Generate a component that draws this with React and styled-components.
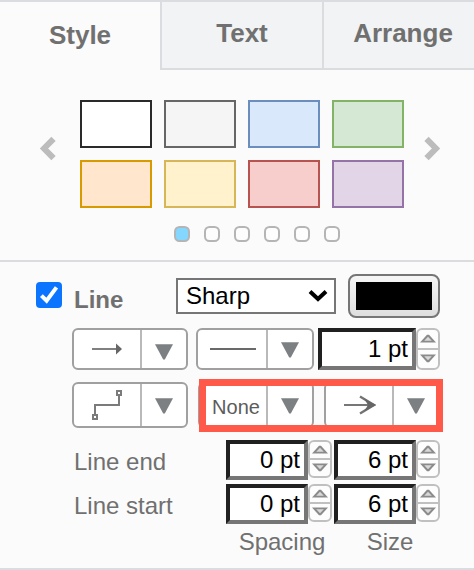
import React from "react";
import styled, { createGlobalStyle } from "styled-components";

const GlobalStyle = createGlobalStyle`
  *, *::before, *::after { box-sizing: border-box; }
  body { margin: 0; background: #fbfbfb; }
`;

const Panel = styled.main`
  width: 474px;
  height: 570px;
  display: flex;
  flex-direction: column;
  overflow: hidden;
  background: #fbfbfb;
  border-top: 2px solid #dadce0;
  border-bottom: 2px solid #dadce0;
  color: #707070;
  font-family: "Liberation Sans", Arial, Helvetica, sans-serif;
  font-size: 24px;
`;

const Tabs = styled.nav`
  display: grid;
  grid-template-columns: 160px 162px 160px;
  height: 68px;
`;

const Tab = styled.button`
  appearance: none;
  margin: 0;
  padding: ${(p) => (p.$active ? "18px 0 0" : "16px 0 0")};
  display: flex;
  align-items: flex-start;
  justify-content: center;
  border: 0 solid #dadce0;
  border-width: ${(p) => (p.$active ? "0" : "0 0 2px 2px")};
  background: ${(p) => (p.$active ? "#fbfbfb" : "#f1f3f4")};
  color: #707070;
  font: bold 26px/30px "Liberation Sans", Arial, sans-serif;
`;

const StyleSection = styled.section`
  height: 192px;
  border-bottom: 2px solid #dadce0;
  padding-top: 30px;
`;

const Carousel = styled.div`
  display: flex;
  align-items: center;
  height: 108px;
  padding: 0 33px 0 38px;
  justify-content: space-between;
`;

const Swatches = styled.div`
  display: grid;
  grid-template-columns: repeat(4, 72px);
  grid-auto-rows: 48px;
  gap: 12px;
`;

const Swatch = styled.div`
  background: ${(p) => p.$fill};
  border: 2px solid ${(p) => p.$stroke};
`;

const Arrow = styled.svg`
  display: block;
  width: 18px;
  height: 28px;
  margin: -11px ${(p) => (p.$right ? "0" : "24px")} 0 ${(p) => (p.$right ? "19px" : "0")};
`;

const Dots = styled.div`
  display: flex;
  gap: 14px;
  padding: 18px 0 0 174px;
`;

const Dot = styled.span`
  width: 16px;
  height: 16px;
  border: 2px solid #b5b5b5;
  border-radius: 5.5px;
  background: ${(p) => (p.$on ? "#84d7ff" : "#fdfdfd")};
`;

const LineSection = styled.section`
  flex: 1;
  padding-top: 12px;
`;

const LineHeader = styled.div`
  display: flex;
  align-items: center;
  height: 44px;
  padding: 0 34px 0 36px;
`;

const Check = styled.span`
  width: 26px;
  height: 26px;
  margin-top: -2px;
  border-radius: 4px;
  background: #0b75ff;
`;

const LineTitle = styled.strong`
  margin: 8px 0 0 12px;
  width: 102px;
  line-height: 28px;
`;

const Select = styled.div`
  width: 160px;
  height: 36px;
  padding: 0 6px 0 8px;
  display: flex;
  align-items: center;
  justify-content: space-between;
  border: 2px solid #767676;
  background: #fff;
  color: #000;
  line-height: 32px;
`;

const ColorButton = styled.div`
  width: 92px;
  height: 44px;
  margin-left: 12px;
  padding: 6px;
  border: 2px solid #767676;
  border-radius: 8px;
  background: linear-gradient(#f6f6f6, #dedede);
`;

const ColorFill = styled.div`
  height: 28px;
  background: #000;
`;

const ButtonRow = styled.div`
  position: relative;
  display: flex;
  height: ${(p) => p.$height}px;
  margin-top: ${(p) => p.$top}px;
  padding-left: 72px;
`;

const SplitButton = styled.div`
  display: flex;
  width: ${(p) => p.$width || 116}px;
  margin-left: ${(p) => p.$gap || 0}px;
  border: 2px solid #a0a0a0;
  border-radius: 6px;
  background: #fff;
  overflow: hidden;
`;

const ButtonFace = styled.div`
  flex: 1;
  display: flex;
  align-items: center;
  justify-content: center;
  color: #5c5c5c;
  font-size: 20px;
  padding-top: ${(p) => p.$drop || 0}px;
  padding-left: ${(p) => p.$inset || 0}px;
`;

const DropFace = styled.div`
  width: 46px;
  flex: none;
  display: flex;
  align-items: center;
  justify-content: center;
  border-left: 2px solid #b9b9b9;
  padding: ${(p) => (p.$tall ? "2px" : "5px")} 1px 0 0;
`;

const Highlight = styled.div`
  position: absolute;
  left: 199px;
  top: -3px;
  width: 244px;
  height: 53px;
  border: 7px solid #ff594a;
`;

const Field = styled.div`
  width: ${(p) => p.$width || 82}px;
  height: ${(p) => p.$height || 40}px;
  padding-right: 4px;
  border: 4px solid;
  border-color: #202020 #767676 #767676 #202020;
  background: #fff;
  color: #000;
  line-height: ${(p) => (p.$height || 40) - 8}px;
  text-align: right;
`;

const SpinnerBox = styled.div`
  width: 24px;
  height: ${(p) => p.$height}px;
  display: flex;
  flex-direction: column;
  border: 2px solid #c0c0c0;
  border-radius: 6px;
  background: #fdfdfd;
`;

const SpinnerHalf = styled.div`
  flex: 1;
  display: flex;
  align-items: center;
  justify-content: center;
  & + & { border-top: 2px solid #c0c0c0; }
`;

const ValueRow = styled.div`
  display: flex;
  height: 40px;
  margin-top: ${(p) => p.$top}px;
  padding-left: 74px;
`;

const ValueLabel = styled.span`
  width: 152px;
  padding-top: 8px;
  line-height: 28px;
`;

const FieldGroup = styled.div`
  display: flex;
  margin-left: ${(p) => p.$gap || 0}px;
`;

const Captions = styled.div`
  display: grid;
  grid-template-columns: 108px 108px;
  margin: 4px 0 0 228px;
  line-height: 28px;
  text-align: center;
`;

const swatches = [
  ["#ffffff", "#2a2a2a"], ["#f5f5f5", "#666666"],
  ["#dae8fc", "#6c8ebf"], ["#d5e8d4", "#82b366"],
  ["#ffe6cc", "#d79b00"], ["#fff2cc", "#d6b656"],
  ["#f8cecc", "#b85450"], ["#e1d5e7", "#9673a6"],
];

function Chevron({ right }) {
  return (
    <Arrow $right={right} viewBox="0 0 18 28">
      <path d={right ? "M3.5 3.8L13 13.5 3.5 23.2" : "M15.5 3.8L6 13.5l9.5 9.7"} fill="none" stroke="#bcbcbc" strokeWidth="6" />
    </Arrow>
  );
}

function Drop({ tall }) {
  return (
    <DropFace $tall={tall}>
      <svg width="20" height="18" viewBox="0 0 20 18">
        <path d="M1 1.2h18L10.8 16.5H9.2Z" fill="#7d8082" />
      </svg>
    </DropFace>
  );
}

function Spinner({ height = 38 }) {
  return (
    <SpinnerBox $height={height}>
      <SpinnerHalf>
        <svg width="18" height="12" viewBox="0 0 18 12">
          <path d="M1 9.5L8 1.7h2l7 7.8Z" fill="#8b8b8b" />
          <path d="M5.2 7.8L9 3.8l3.8 4Z" fill="#d8d8d8" />
        </svg>
      </SpinnerHalf>
      <SpinnerHalf>
        <svg width="18" height="12" viewBox="0 0 18 12">
          <path d="M1 1.5L8 9.3h2l7-7.8Z" fill="#8b8b8b" />
          <path d="M5.2 3.2L9 7.2l3.8-4Z" fill="#d8d8d8" />
        </svg>
      </SpinnerHalf>
    </SpinnerBox>
  );
}

function ValueLine({ label, top }) {
  return (
    <ValueRow $top={top}>
      <ValueLabel>{label}</ValueLabel>
      <FieldGroup><Field>0 pt</Field><Spinner /></FieldGroup>
      <FieldGroup $gap={2}><Field>6 pt</Field><Spinner /></FieldGroup>
    </ValueRow>
  );
}

export default function App() {
  return (
    <>
      <GlobalStyle />
      <Panel>
        <Tabs>
          <Tab $active>Style</Tab>
          <Tab>Text</Tab>
          <Tab>Arrange</Tab>
        </Tabs>
        <StyleSection>
          <Carousel>
            <Chevron />
            <Swatches>
              {swatches.map(([fill, stroke]) => <Swatch key={fill} $fill={fill} $stroke={stroke} />)}
            </Swatches>
            <Chevron right />
          </Carousel>
          <Dots>
            {[0, 1, 2, 3, 4, 5].map((n) => <Dot key={n} $on={n === 0} />)}
          </Dots>
        </StyleSection>
        <LineSection>
          <LineHeader>
            <Check>
              <svg width="26" height="26" viewBox="0 0 26 26">
                <path d="M5.4 13.6l5.2 5.1L20.5 5.4" fill="none" stroke="#fff" strokeWidth="4" />
              </svg>
            </Check>
            <LineTitle>Line</LineTitle>
            <Select>
              Sharp
              <svg width="20" height="14" viewBox="0 0 20 14">
                <path d="M2 2.5l8 7.5 8-7.5" fill="none" stroke="#000" strokeWidth="4" />
              </svg>
            </Select>
            <ColorButton><ColorFill /></ColorButton>
          </LineHeader>
          <ButtonRow $height={42} $top={10}>
            <SplitButton>
              <ButtonFace>
                <svg width="32" height="14" viewBox="0 0 32 14">
                  <path d="M1 7h26" stroke="#808080" strokeWidth="2" />
                  <path d="M25 1.5L31 7l-6 5.5Z" fill="#666" />
                </svg>
              </ButtonFace>
              <Drop />
            </SplitButton>
            <SplitButton $width={118} $gap={8}>
              <ButtonFace $inset={2}>
                <svg width="46" height="4" viewBox="0 0 46 4">
                  <path d="M0 2h46" stroke="#696969" strokeWidth="2" />
                </svg>
              </ButtonFace>
              <Drop tall />
            </SplitButton>
            <FieldGroup $gap={4}><Field $width={98} $height={42}>1 pt</Field><Spinner height={42} /></FieldGroup>
          </ButtonRow>
          <ButtonRow $height={46} $top={12}>
            <SplitButton>
              <ButtonFace>
                <svg width="32" height="32" viewBox="0 0 32 32">
                  <g fill="none" stroke="#7b7b7b" strokeWidth="2">
                    <path d="M4 25V16h24V6" />
                    <path d="M2 26h4v4H2ZM26 2h4v4h-4Z" fill="#fff" />
                  </g>
                </svg>
              </ButtonFace>
              <Drop tall />
            </SplitButton>
            <SplitButton $gap={10}>
              <ButtonFace $drop={4} $inset={6}>None</ButtonFace>
              <Drop tall />
            </SplitButton>
            <SplitButton $gap={10}>
              <ButtonFace $inset={2}>
                <svg width="34" height="22" viewBox="0 0 34 22">
                  <path d="M1 11h25" stroke="#777" strokeWidth="2" />
                  <path d="M17 2.5L31 11 17 19.5" fill="none" stroke="#747474" strokeWidth="2.4" />
                  <path d="M21 4.5L33 11 21 17.5l4-6.5Z" fill="#666" />
                </svg>
              </ButtonFace>
              <Drop tall />
            </SplitButton>
            <Highlight />
          </ButtonRow>
          <ValueLine label="Line end" top={12} />
          <ValueLine label="Line start" top={4} />
          <Captions><span>Spacing</span><span>Size</span></Captions>
        </LineSection>
      </Panel>
    </>
  );
}
